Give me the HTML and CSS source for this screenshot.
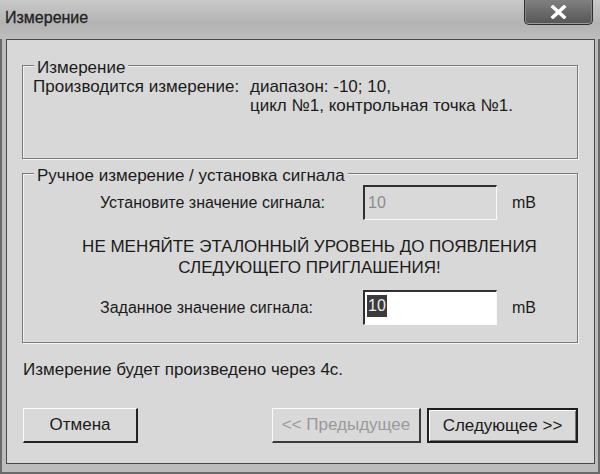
FILE: index.html
```html
<!DOCTYPE html>
<html lang="ru">
<head>
<meta charset="utf-8">
<title>Измерение</title>
<link rel="stylesheet" href="styles.css">
</head>
<body>
<div class="window">
  <div class="titlebar">
    <span class="title">Измерение</span>
    <div class="close">
      <svg width="17" height="14" viewBox="0 0 17 14"><path d="M3 2 L14 12 M14 2 L3 12" stroke="#ffffff" stroke-width="3.6" stroke-linecap="square" fill="none"/></svg>
    </div>
  </div>
  <div class="client">
    <div class="group g1">
      <div class="group-title">Измерение</div>
      <div class="info">
        <span>Производится измерение:</span><span>диапазон: -10; 10,</span>
        <span></span><span>цикл №1, контрольная точка №1.</span>
      </div>
    </div>
    <div class="group g2">
      <div class="group-title">Ручное измерение / установка сигнала</div>
      <div class="field-row">
        <span class="label">Установите значение сигнала:</span>
        <div class="input disabled">10</div>
        <span class="unit">mB</span>
      </div>
      <p class="warning">НЕ МЕНЯЙТЕ ЭТАЛОННЫЙ УРОВЕНЬ ДО ПОЯВЛЕНИЯ<br>СЛЕДУЮЩЕГО ПРИГЛАШЕНИЯ!</p>
      <div class="field-row">
        <span class="label">Заданное значение сигнала:</span>
        <div class="input active"><span class="sel">10</span></div>
        <span class="unit">mB</span>
      </div>
    </div>
    <p class="status">Измерение будет произведено через 4с.</p>
    <div class="buttons">
      <div class="btn cancel">Отмена</div>
      <div class="spacer"></div>
      <div class="btn prev">&lt;&lt; Предыдущее</div>
      <div class="btn next">Следующее &gt;&gt;</div>
    </div>
  </div>
</div>
</body>
</html>
```
FILE: styles.css
```css
body {
  margin: 0;
  font-family: "Liberation Sans", Arial, sans-serif;
  color: #1b1b1b;
}
.window {
  width: 600px;
  height: 474px;
  box-sizing: border-box;
  background: #bcbcbc;
  border: 2px solid #6a6a6a;
  border-top: none;
  display: flex;
  flex-direction: column;
}
.titlebar {
  height: 39px;
  flex: none;
  display: flex;
  justify-content: space-between;
  align-items: flex-start;
  background: linear-gradient(#c9c9c9, #b3b3b3 60%, #bdbdbd);
  margin: 0 -2px;
}
.title {
  font-size: 16px;
  line-height: 18px;
  margin: 9px 0 0 5px;
  color: #222;
  -webkit-text-stroke: 0.3px #222;
}
.close {
  width: 69px;
  height: 25px;
  box-sizing: border-box;
  margin-right: 7px;
  border: 1px solid #2e2e2e;
  border-top: none;
  border-radius: 0 0 5px 5px;
  background: linear-gradient(#808080, #555555);
  box-shadow: inset 0 -1px 0 #9a9a9a, inset 1px 0 0 #888, inset -1px 0 0 #888;
  display: flex;
  justify-content: center;
  align-items: center;
}
.client {
  flex: 1;
  margin: 0 3px 8px 4px;
  border: 1px solid #4a4a4a;
  background: #d8d8d8;
  display: flex;
  flex-direction: column;
}
.group {
  box-sizing: border-box;
  margin: 0 16px 0 15px;
  border: 1px solid #7a7a7a;
  box-shadow: inset 1px 1px 0 #f2f2f2, 1px 1px 0 #f2f2f2;
}
.g1 {
  margin-top: 25px;
  height: 94px;
}
.g2 {
  margin-top: 14px;
  height: 170px;
}
.group-title {
  width: fit-content;
  font-size: 17px;
  line-height: 18px;
  margin: -7px 0 0 11px;
  padding: 0 3px;
  background: #d8d8d8;
}
.info {
  display: grid;
  grid-template-columns: 217px auto;
  font-size: 17px;
  line-height: 19px;
  padding-left: 10px;
}
.field-row {
  display: flex;
  align-items: center;
  padding-left: 77px;
  font-size: 16px;
}
.g2 .field-row:first-of-type {
  margin-top: 6px;
}
.label {
  width: 263px;
}
.input {
  box-sizing: border-box;
  width: 134px;
  height: 35px;
  border-top: 2px solid #303030;
  border-left: 2px solid #303030;
  border-right: 1px solid #fafafa;
  border-bottom: 1px solid #fafafa;
  padding: 5px 0 0 3px;
  font-size: 16px;
  line-height: 22px;
}
.input.disabled {
  background: #d9d9d9;
  color: #8c8c8c;
}
.input.active {
  background: #ffffff;
  padding: 3px 0 0 2px;
}
.sel {
  display: inline-block;
  background: #3a3a3a;
  color: #ececec;
  padding: 0 1px;
  line-height: 22px;
}
.unit {
  margin-left: 15px;
}
.warning {
  margin: 16px 0 12px 19px;
  text-align: center;
  font-size: 17px;
  line-height: 21px;
}
.status {
  margin: 17px 0 0 16px;
  font-size: 17px;
  line-height: 20px;
}
.buttons {
  display: flex;
  margin: 28px 16px 0 16px;
  gap: 6px;
}
.spacer {
  flex: 1;
}
.btn {
  box-sizing: border-box;
  height: 35px;
  display: flex;
  align-items: center;
  justify-content: center;
  font-size: 17px;
  background: #d9d9d9;
  border-top: 1px solid #fbfbfb;
  border-left: 1px solid #fbfbfb;
  border-right: 2px solid #222;
  border-bottom: 2px solid #222;
}
.cancel {
  width: 115px;
}
.prev {
  width: 149px;
  color: #9a9a9a;
  border-right-color: #3a3a3a;
  border-bottom-color: #3a3a3a;
}
.next {
  width: 151px;
  border: 2px solid #1e1e1e;
  box-shadow: inset 1px 1px 0 #fbfbfb, inset -1px -1px 0 #777;
}
```
